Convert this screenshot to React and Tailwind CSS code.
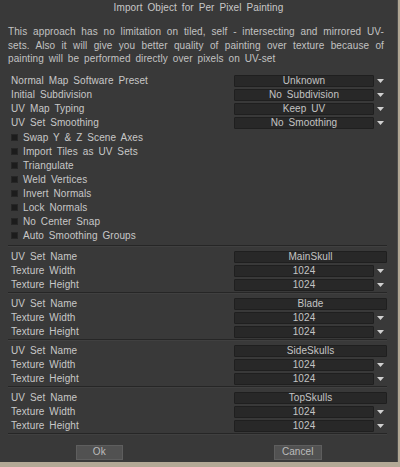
const font = { fontFamily: '"Liberation Sans", Arial, sans-serif' }

const presets = [
  ['Normal Map Software Preset', 'Unknown'],
  ['Initial Subdivision', 'No Subdivision'],
  ['UV Map Typing', 'Keep UV'],
  ['UV Set Smoothing', 'No Smoothing'],
]

const checks = [
  'Swap Y & Z Scene Axes',
  'Import Tiles as UV Sets',
  'Triangulate',
  'Weld Vertices',
  'Invert Normals',
  'Lock Normals',
  'No Center Snap',
  'Auto Smoothing Groups',
]

const uvSets = ['MainSkull', 'Blade', 'SideSkulls', 'TopSkulls']

function Arrow() {
  return (
    <svg width="7" height="4" viewBox="0 0 7 4" className="ml-[3px]">
      <path d="M0 0 H7 L3.5 4 Z" fill="#d0d0d0" />
    </svg>
  )
}

function Dropdown({ value }) {
  return (
    <div className="flex items-center">
      <div className="w-[140px] h-[12px] bg-[#282828] border border-[#1f1f1f] rounded-[1px] flex items-center justify-center text-[#c4c4c4] leading-none">
        {value}
      </div>
      <Arrow />
    </div>
  )
}

function Row({ label, children }) {
  return (
    <div className="h-[14px] flex items-center justify-between pl-[3px]">
      <span className="text-[#c8c8c8]">{label}</span>
      <div className="w-[153px] flex">{children}</div>
    </div>
  )
}

function Check({ label }) {
  return (
    <div className="h-[14px] flex items-center pl-[3px]">
      <span className="w-[7px] h-[7px] bg-[#1c1c1c] border border-[#262626] mr-[5px]" />
      <span className="text-[#c8c8c8]">{label}</span>
    </div>
  )
}

function Sep() {
  return <div className="h-px bg-[#262626] border-b border-[#404040] box-content" />
}

export default function App() {
  return (
    <div className="w-[400px] h-[467px] bg-[#b3a996] text-[10px] tracking-[0.1px] [word-spacing:2px]" style={font}>
      <div className="w-[398px] h-[462px] bg-[#393939] border-r border-[#4d4d4d] flex flex-col">
        <div className="h-[15px] flex items-center justify-center text-[#c8c8c8]">
          Import Object for Per Pixel Painting
        </div>
        <p className="mt-[10px] pl-[8px] pr-[13px] text-[#c2c2c2] leading-[13.5px] text-justify">
          This approach has no limitation on tiled, self - intersecting and mirrored UV-sets. Also it will give you better quality of painting over texture because of painting will be performed directly over pixels on UV-set
        </p>
        <div className="mt-[8px] pl-[8px] pr-[10px]">
          {presets.map(([l, v]) => (
            <Row key={l} label={l}>
              <Dropdown value={v} />
            </Row>
          ))}
          <div className="mt-[1px]">
            {checks.map((c) => (
              <Check key={c} label={c} />
            ))}
          </div>
          <div className="mt-[2px]">
            <Sep />
          </div>
          {uvSets.map((n) => (
            <div key={n}>
              <div className="pt-[3px]">
                <Row label="UV Set Name">
                  <div className="w-[153px] h-[12px] bg-[#282828] border border-[#1f1f1f] rounded-[1px] flex items-center justify-center text-[#c4c4c4] leading-none">
                    {n}
                  </div>
                </Row>
                <Row label="Texture Width">
                  <Dropdown value="1024" />
                </Row>
                <Row label="Texture Height">
                  <Dropdown value="1024" />
                </Row>
              </div>
              <Sep />
            </div>
          ))}
        </div>
        <div className="grid grid-cols-2 mt-[10px]">
          <div className="flex justify-center">
            <button className="w-[47px] h-[15px] bg-[#515151] border border-[#5e5e5e] text-[#bcbcbc] leading-none">Ok</button>
          </div>
          <div className="flex justify-center">
            <button className="w-[48px] h-[15px] bg-[#515151] border border-[#5e5e5e] text-[#bcbcbc] leading-none">Cancel</button>
          </div>
        </div>
      </div>
    </div>
  )
}
